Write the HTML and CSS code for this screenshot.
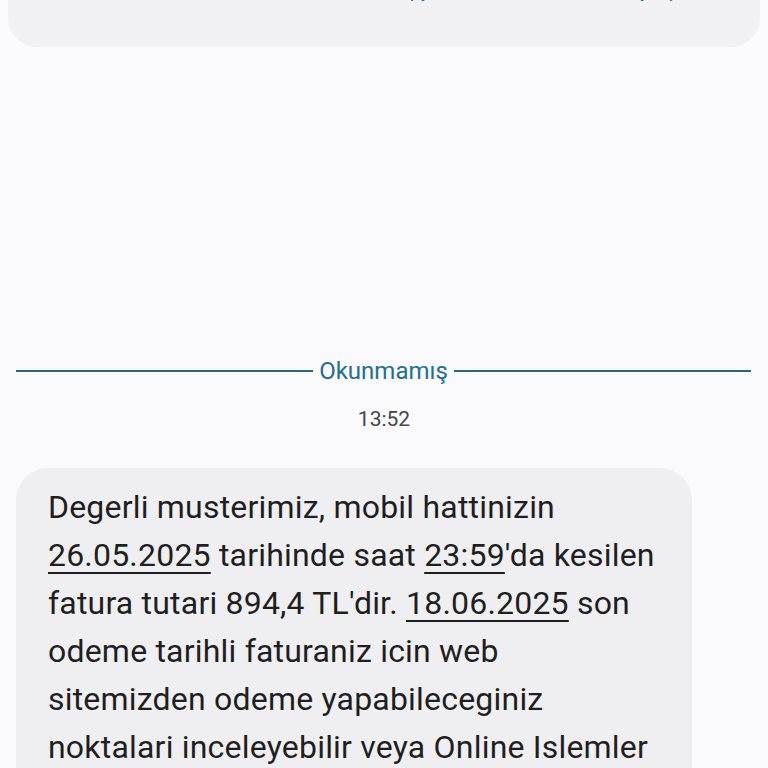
FILE: index.html
```html
<!DOCTYPE html>
<html lang="tr">
<head>
<meta charset="utf-8">
<title>Mesajlar</title>
<link rel="stylesheet" href="styles.css">
</head>
<body>

<div class="prev-card">
  <div class="prev-actions">
    <span class="act act-copy">Kopyala</span>
    <span class="act act-share">Paylaş</span>
  </div>
</div>

<div class="divider">
  <span class="divider-line"></span>
  <span class="divider-text">Okunmamış</span>
  <span class="divider-line"></span>
</div>

<div class="stamp">13:52</div>

<div class="bubble">
  Degerli musterimiz, mobil hattinizin<br>
  <u>26.05.2025</u> tarihinde saat <u>23:59</u>'da kesilen<br>
  fatura tutari 894,4 TL'dir. <u>18.06.2025</u> son<br>
  odeme tarihli faturaniz icin web<br>
  sitemizden odeme yapabileceginiz<br>
  noktalari inceleyebilir veya Online Islemler<br>
  ile odeme yapabilirsiniz.
</div>

</body>
</html>
```

FILE: styles.css
```css
* {
  box-sizing: border-box;
}

body {
  margin: 0;
  background: #fafafd;
  font-family: Roboto, "Noto Sans", sans-serif;
  color: #1f1f1f;
  overflow: hidden;
}

/* карточка предыдущего сообщения, обрезана сверху */

.prev-card {
  margin: -60px 8px 0;
  height: 107px;
  padding-top: 38px;
  background: #f1f1f4;
  border-radius: 0 0 30px 30px;
}

.prev-actions {
  display: flex;
  font-size: 20px;
  line-height: 24px;
  color: #1f6d8c;
}

.act-copy {
  margin-left: 378px;
}

.act-share {
  margin-left: 160px;
}

/* разделитель */

.divider {
  display: flex;
  align-items: center;
  gap: 6px;
  margin: 309px 17px 0 16px;
}

.divider-line {
  flex: 1;
  height: 2px;
  background: #2a6684;
}

.divider-text {
  font-size: 24px;
  line-height: 30px;
  color: #236f8f;
}

.stamp {
  margin-top: 18px;
  text-align: center;
  font-size: 21px;
  line-height: 30px;
  color: #444746;
}

/* сообщение */

.bubble {
  width: 676px;
  margin: 34px 0 0 16px;
  padding: 15px 32px 32px;
  background: #efeff2;
  border-radius: 32px;
  font-size: 32px;
  line-height: 48px;
  letter-spacing: 0.2px;
  white-space: nowrap;
}

.bubble u {
  text-decoration-thickness: 2px;
  text-underline-offset: 6px;
}
```
